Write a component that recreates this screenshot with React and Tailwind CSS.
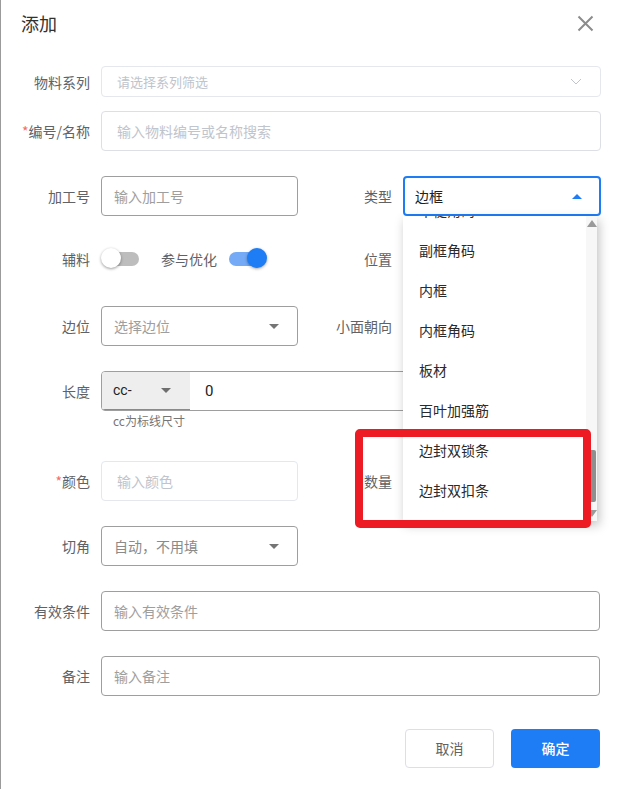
import React from "react";

const font = { fontFamily: '"Noto Sans CJK SC", "Noto Sans", sans-serif' };

function Label({ children, req }) {
  return (
    <div className="w-[90px] shrink-0 text-right text-[14px] leading-none text-[#606266]">
      {req && <span className="text-[#f56c6c]">*</span>}
      {children}
    </div>
  );
}

function CaretDown({ color = "#757575" }) {
  return (
    <svg width="10" height="5" viewBox="0 0 10 5">
      <path d="M0 0 L10 0 L5 5 Z" fill={color} />
    </svg>
  );
}

function CaretUp({ color = "#1e7df5" }) {
  return (
    <svg width="10" height="5" viewBox="0 0 10 5">
      <path d="M0 5 L10 5 L5 0 Z" fill={color} />
    </svg>
  );
}

function Switch({ on }) {
  return (
    <div className="relative h-[40px] w-[40px] flex items-center">
      <div
        className={
          on
            ? "h-[14px] w-[34px] rounded-full bg-[#74aaf6] ml-[1px]"
            : "h-[14px] w-[34px] rounded-full bg-[#bdbdbd] ml-[4px]"
        }
      />
      <div
        className={
          on
            ? "absolute left-[19px] top-[9px] h-[20px] w-[20px] rounded-full bg-[#1e7df5] shadow-[0_1px_3px_rgba(0,0,0,0.35)]"
            : "absolute left-[0px] top-[9px] h-[20px] w-[20px] rounded-full bg-white shadow-[0_1px_3px_rgba(0,0,0,0.4)]"
        }
      />
    </div>
  );
}

export default function App() {
  const items = ["中梃角码", "副框角码", "内框", "内框角码", "板材", "百叶加强筋", "边封双锁条", "边封双扣条"];
  return (
    <div className="relative h-[789px] w-[621px] overflow-hidden bg-white" style={font}>
      <div className="absolute left-0 top-0 h-full w-[1px] bg-[#9b9b9b]" />
      {/* header */}
      <div className="flex h-[46px] items-center justify-between pl-[21px] pr-[27px]">
        <div className="text-[18px] leading-none text-[#303133]">添加</div>
        <svg width="17" height="17" viewBox="0 0 17 17">
          <path d="M1.5 1.5 L15.5 15.5 M15.5 1.5 L1.5 15.5" stroke="#8c8c8c" strokeWidth="2" />
        </svg>
      </div>

      {/* 物料系列 */}
      <div className="mt-[20px] flex h-[31px] items-center">
        <Label>物料系列</Label>
        <div className="ml-[11px] flex h-[31px] w-[500px] items-center justify-between rounded-[4px] border border-[#e4e7ed] pl-[15px] pr-[18px]">
          <span className="text-[13px] text-[#c0c4cc]">请选择系列筛选</span>
          <svg width="12" height="7" viewBox="0 0 12 7">
            <path d="M1 1 L6 6 L11 1" stroke="#c0c4cc" strokeWidth="1" fill="none" />
          </svg>
        </div>
      </div>

      {/* 编号/名称 */}
      <div className="mt-[14px] flex h-[40px] items-center">
        <Label req>编号/名称</Label>
        <div className="ml-[11px] flex h-[40px] w-[500px] items-center rounded-[4px] border border-[#dcdfe6] pl-[15px]">
          <span className="text-[14px] text-[#c0c4cc]">输入物料编号或名称搜索</span>
        </div>
      </div>

      {/* 加工号 / 类型 */}
      <div className="mt-[25px] flex h-[40px] items-center">
        <Label>加工号</Label>
        <div className="ml-[11px] flex h-[40px] w-[197px] items-center rounded-[4px] border border-[#9e9e9e] pl-[12px]">
          <span className="text-[14px] text-[#9e9e9e]">输入加工号</span>
        </div>
        <div className="ml-[4px]">
          <Label>类型</Label>
        </div>
        <div className="ml-[11px] flex h-[40px] w-[198px] items-center justify-between rounded-[4px] border-2 border-[#1e7df5] pl-[10px] pr-[17px]">
          <span className="text-[14px] text-[#212121]">边框</span>
          <CaretUp />
        </div>
      </div>

      {/* 辅料 / 位置 */}
      <div className="mt-[23px] flex h-[40px] items-center">
        <Label>辅料</Label>
        <div className="ml-[11px] flex w-[197px] items-center">
          <Switch on={false} />
          <span className="ml-[20px] text-[14px] text-[#606266]">参与优化</span>
          <div className="ml-[11px]">
            <Switch on={true} />
          </div>
        </div>
        <div className="ml-[4px]">
          <Label>位置</Label>
        </div>
      </div>

      {/* 边位 / 小面朝向 */}
      <div className="mt-[27px] flex h-[40px] items-center">
        <Label>边位</Label>
        <div className="ml-[11px] flex h-[40px] w-[197px] items-center justify-between rounded-[4px] border border-[#9e9e9e] pl-[12px] pr-[18px]">
          <span className="text-[14px] text-[#9e9e9e]">选择边位</span>
          <CaretDown />
        </div>
        <div className="ml-[4px]">
          <Label>小面朝向</Label>
        </div>
      </div>

      {/* 长度 */}
      <div className="mt-[25px] flex h-[40px] items-center">
        <Label>长度</Label>
        <div className="ml-[11px] flex h-[40px] w-[496px] items-stretch overflow-hidden rounded-[4px] border border-[#9e9e9e]">
          <div className="flex w-[88px] items-center justify-between bg-[#eeeeee] pl-[11px] pr-[19px] border-b border-[#8a8a8a]">
            <span className="text-[14px] text-[#212121]" style={{ fontFamily: "Roboto, sans-serif" }}>cc-</span>
            <CaretDown color="#6e6e6e" />
          </div>
          <div className="flex items-center pl-[15px]">
            <span className="text-[15px] text-[#212121]" style={{ fontFamily: "Roboto, sans-serif" }}>0</span>
          </div>
        </div>
      </div>
      <div className="ml-[113px] mt-[2px] text-[12px] leading-[16px] text-[#757575]">cc为标线尺寸</div>

      {/* 颜色 / 数量 */}
      <div className="mt-[32px] flex h-[40px] items-center">
        <Label req>颜色</Label>
        <div className="ml-[11px] flex h-[40px] w-[197px] items-center rounded-[4px] border border-[#e4e7ed] pl-[15px]">
          <span className="text-[14px] text-[#c0c4cc]">输入颜色</span>
        </div>
        <div className="ml-[4px]">
          <Label>数量</Label>
        </div>
      </div>

      {/* 切角 */}
      <div className="mt-[25px] flex h-[40px] items-center">
        <Label>切角</Label>
        <div className="ml-[11px] flex h-[40px] w-[197px] items-center justify-between rounded-[4px] border border-[#9e9e9e] pl-[12px] pr-[18px]">
          <span className="text-[14px] text-[#8a8a8a]">自动，不用填</span>
          <CaretDown />
        </div>
      </div>

      {/* 有效条件 */}
      <div className="mt-[25px] flex h-[40px] items-center">
        <Label>有效条件</Label>
        <div className="ml-[11px] flex h-[40px] w-[499px] items-center rounded-[4px] border border-[#9e9e9e] pl-[12px]">
          <span className="text-[14px] text-[#9e9e9e]">输入有效条件</span>
        </div>
      </div>

      {/* 备注 */}
      <div className="mt-[25px] flex h-[40px] items-center">
        <Label>备注</Label>
        <div className="ml-[11px] flex h-[40px] w-[499px] items-center rounded-[4px] border border-[#9e9e9e] pl-[12px]">
          <span className="text-[14px] text-[#9e9e9e]">输入备注</span>
        </div>
      </div>

      {/* buttons */}
      <div className="mt-[33px] flex justify-end gap-[17px] pr-[21px]">
        <div className="flex h-[39px] w-[89px] items-center justify-center rounded-[4px] border border-[#dcdfe6] text-[14px] text-[#606266]">
          取消
        </div>
        <div className="flex h-[39px] w-[89px] items-center justify-center rounded-[4px] bg-[#1e7df5] text-[14px] font-medium text-white">
          确定
        </div>
      </div>

      {/* dropdown */}
      <div className="absolute left-[403px] top-[216px] flex h-[305px] w-[194px] overflow-hidden bg-white shadow-[2px_4px_10px_rgba(0,0,0,0.25)]">
        <div className="flex-1 overflow-hidden">
          <div className="-mt-[26px]">
            {items.map((t) => (
              <div key={t} className="flex h-[40px] items-center pl-[16px] text-[14px] text-[#2b2b2b]">
                {t}
              </div>
            ))}
          </div>
        </div>
        <div className="relative w-[11px] bg-[#f7f7f7]">
          <div className="absolute left-[1px] top-[4px]">
            <svg width="10" height="7" viewBox="0 0 10 7">
              <path d="M0 7 L10 7 L5 0 Z" fill="#9a9a9a" />
            </svg>
          </div>
          <div className="absolute left-[2px] top-[234px] h-[52px] w-[8px] rounded-[2px] bg-[#8f8f8f]" />
          <div className="absolute left-[1px] top-[294px]">
            <svg width="10" height="7" viewBox="0 0 10 7">
              <path d="M0 0 L10 0 L5 7 Z" fill="#9a9a9a" />
            </svg>
          </div>
        </div>
      </div>

      {/* red highlight */}
      <div className="absolute left-[355px] top-[429px] h-[99px] w-[236px] rounded-[5px] border-[8px] border-[#ed1c24]" />
    </div>
  );
}
